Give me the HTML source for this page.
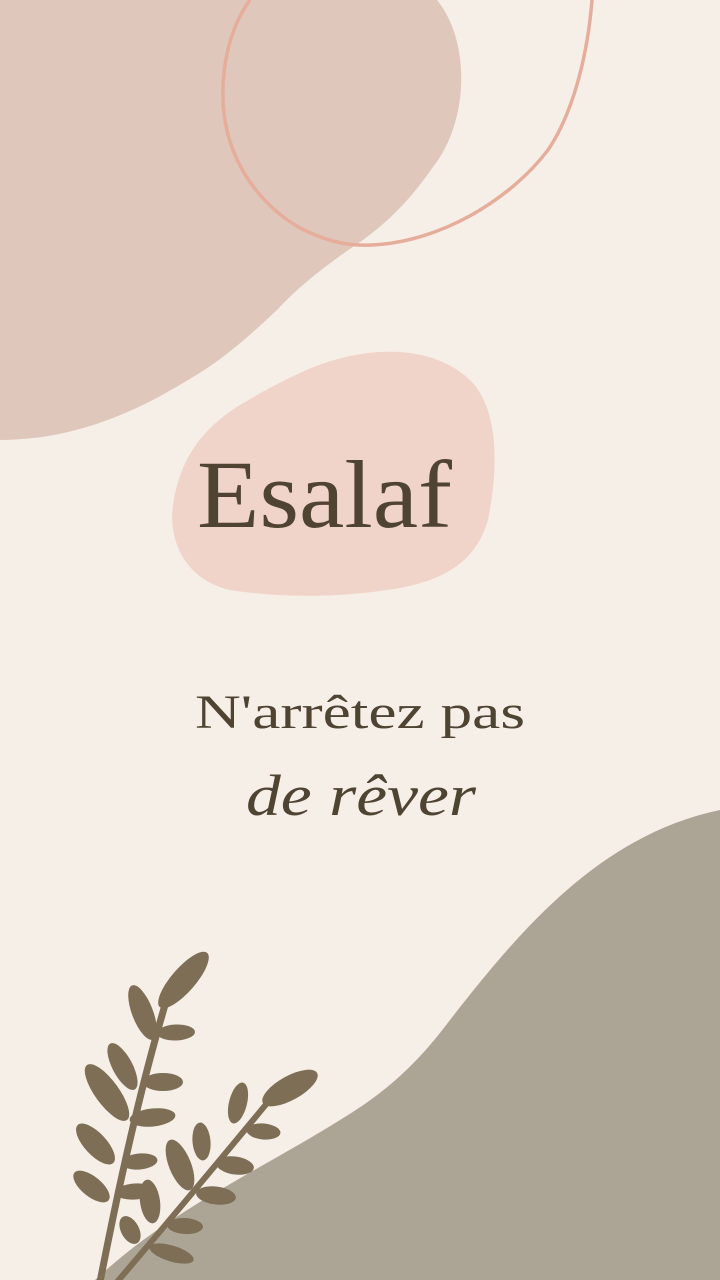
<!DOCTYPE html>
<html><head><meta charset="utf-8"><style>
html,body{margin:0;padding:0;width:720px;height:1280px;overflow:hidden;background:#f6efe8}
svg{display:block}
</style></head><body>
<svg width="720" height="1280" viewBox="0 0 720 1280" xmlns="http://www.w3.org/2000/svg">
<rect width="720" height="1280" fill="#f6efe8"/>
<path d="M0,0 L437,0 C470,40 470,120 433,167 C410,200 390,220 363,240 C330,262 300,285 277,310 C240,345 215,365 183,383 C130,415 70,440 0,440 Z" fill="#dfc7bc"/>
<path d="M250,0 C228,30 222,70 223,100 C225,160 260,205 300,228 C330,243 350,246 372,245 C440,242 510,200 548,150 C575,110 588,50 592,0" fill="none" stroke="#e6ad9b" stroke-width="3.5"/>
<path d="M300,373 C360,345 430,342 470,380 C500,410 498,470 488,520 C475,565 440,580 400,588 C340,598 280,598 230,590 C185,580 168,540 173,505 C180,460 200,430 240,405 C260,393 280,382 300,373 Z" fill="#f0d3c9"/>
<path d="M720,810 L720,1280 L95,1280 C170,1210 260,1170 340,1120 C390,1090 420,1060 450,1020 C520,930 600,835 720,810 Z" fill="#aca596"/>
<g stroke="#7d6e55" stroke-linecap="round" fill="none">
<path d="M100,1282 C120,1180 140,1090 165,1005" stroke-width="7"/>
<path d="M117,1282 C170,1220 220,1160 268,1102" stroke-width="6"/>
</g>
<g fill="#7d6e55">
<ellipse cx="183.5" cy="980" rx="36" ry="12" transform="rotate(-49 183.5 980)"/>
<ellipse cx="142.5" cy="1012.5" rx="29" ry="10.5" transform="rotate(69 142.5 1012.5)"/>
<ellipse cx="176" cy="1032.5" rx="19" ry="8" transform="rotate(-2 176 1032.5)"/>
<ellipse cx="122.5" cy="1066.5" rx="26" ry="10" transform="rotate(62 122.5 1066.5)"/>
<ellipse cx="163" cy="1082" rx="20" ry="9"/>
<ellipse cx="107" cy="1092.5" rx="34" ry="12" transform="rotate(54 107 1092.5)"/>
<ellipse cx="152.5" cy="1117.5" rx="23" ry="9" transform="rotate(-6 152.5 1117.5)"/>
<ellipse cx="95.5" cy="1144" rx="26" ry="11" transform="rotate(47 95.5 1144)"/>
<ellipse cx="139.5" cy="1161.5" rx="18" ry="8" transform="rotate(-5 139.5 1161.5)"/>
<ellipse cx="91.5" cy="1186.5" rx="22" ry="10" transform="rotate(39 91.5 1186.5)"/>
<ellipse cx="135" cy="1191.5" rx="20" ry="8" transform="rotate(-4 135 1191.5)"/>
<ellipse cx="290" cy="1088" rx="31" ry="12" transform="rotate(-29 290 1088)"/>
<ellipse cx="238" cy="1103" rx="21" ry="9" transform="rotate(-76 238 1103)"/>
<ellipse cx="263.5" cy="1131.5" rx="17" ry="8" transform="rotate(5 263.5 1131.5)"/>
<ellipse cx="201.5" cy="1141.5" rx="19" ry="9" transform="rotate(85 201.5 1141.5)"/>
<ellipse cx="235" cy="1165.5" rx="19" ry="9" transform="rotate(8 235 1165.5)"/>
<ellipse cx="180" cy="1165" rx="27" ry="11" transform="rotate(68 180 1165)"/>
<ellipse cx="216" cy="1195.5" rx="20" ry="9" transform="rotate(7 216 1195.5)"/>
<ellipse cx="150" cy="1201.5" rx="22" ry="10" transform="rotate(82 150 1201.5)"/>
<ellipse cx="185" cy="1226" rx="18" ry="8" transform="rotate(3 185 1226)"/>
<ellipse cx="130" cy="1230" rx="15" ry="9" transform="rotate(62 130 1230)"/>
<ellipse cx="171.5" cy="1253.5" rx="23" ry="8" transform="rotate(17 171.5 1253.5)"/>
</g>
<g fill="#4f4432">
<text x="197" y="527" font-family="Liberation Serif, serif" font-size="96" textLength="255" lengthAdjust="spacingAndGlyphs">Esalaf</text>
<text x="195" y="728" font-family="Liberation Serif, serif" font-size="48" textLength="330" lengthAdjust="spacingAndGlyphs">N'arrêtez pas</text>
<text x="246" y="815" font-family="Liberation Serif, serif" font-style="italic" font-size="58" textLength="230" lengthAdjust="spacingAndGlyphs">de rêver</text>
</g>
</svg>
</body></html>
